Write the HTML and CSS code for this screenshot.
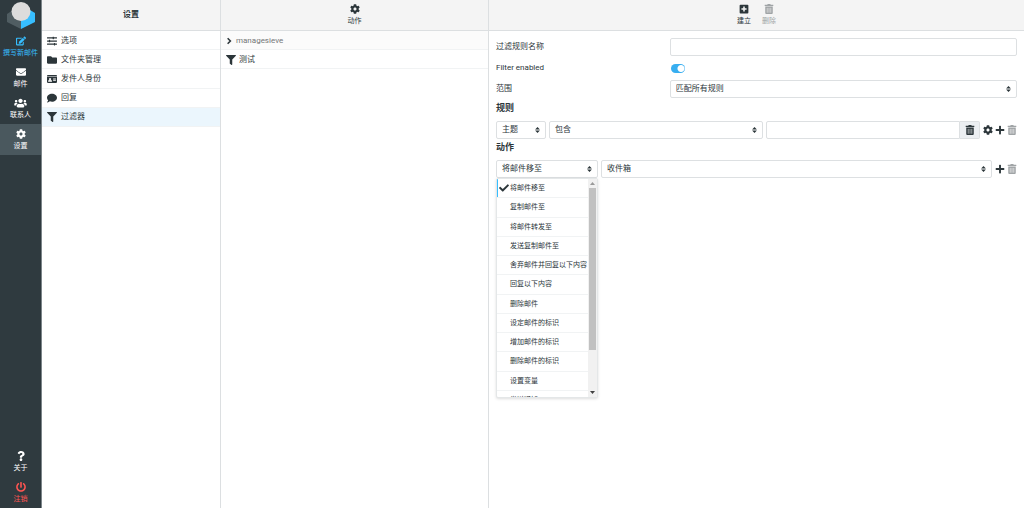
FILE: index.html
```html
<!DOCTYPE html>
<html lang="zh-CN">
<head>
<meta charset="utf-8">
<title>过滤器</title>
<link rel="stylesheet" href="styles.css">
</head>
<body>
<svg class="sprite" aria-hidden="true">
  <symbol id="edit" viewBox="0 0 576 512"><path d="M402.6 83.2l90.2 90.2c3.8 3.8 3.8 10 0 13.8L274.4 405.6l-92.8 10.3c-12.4 1.4-22.9-9.1-21.5-21.5l10.3-92.8L388.8 83.2c3.8-3.8 10-3.8 13.8 0zm162-22.9l-48.8-48.8c-15.2-15.2-39.9-15.2-55.2 0l-35.4 35.4c-3.8 3.8-3.8 10 0 13.8l90.2 90.2c3.8 3.8 10 3.8 13.8 0l35.4-35.4c15.2-15.3 15.2-40 0-55.2zM384 346.2V448H64V128h229.8c3.2 0 6.2-1.3 8.5-3.5l40-40c7.6-7.6 2.2-20.5-8.5-20.5H48C21.5 64 0 85.5 0 112v352c0 26.5 21.5 48 48 48h352c26.5 0 48-21.5 48-48V306.2c0-10.7-12.9-16-20.5-8.5l-40 40c-2.2 2.3-3.5 5.3-3.5 8.5z"/></symbol>
  <symbol id="mail" viewBox="0 0 512 512"><path d="M502.3 190.8c3.9-3.1 9.7-.2 9.7 4.7V400c0 26.5-21.5 48-48 48H48c-26.5 0-48-21.5-48-48V195.6c0-5 5.7-7.8 9.7-4.7 22.4 17.4 52.1 39.5 154.1 113.6 21.1 15.4 56.7 47.8 92.2 47.6 35.7.3 72-32.8 92.3-47.6 102-74.1 131.6-96.3 154-113.7zM256 320c23.2.4 56.6-29.2 73.4-41.4 132.7-96.3 142.8-104.7 173.4-128.7 5.8-4.5 9.2-11.5 9.2-18.9v-19c0-26.5-21.5-48-48-48H48c-26.5 0-48 21.5-48 48v19c0 7.4 3.4 14.3 9.2 18.9 30.6 23.9 40.7 32.4 173.4 128.7 16.8 12.2 50.2 41.8 73.4 41.4z"/></symbol>
  <symbol id="users" viewBox="0 0 640 512"><path d="M96 224c35.3 0 64-28.7 64-64s-28.7-64-64-64-64 28.7-64 64 28.7 64 64 64zm448 0c35.3 0 64-28.7 64-64s-28.7-64-64-64-64 28.7-64 64 28.7 64 64 64zm32 32h-64c-17.6 0-33.5 7.1-45.1 18.6 40.3 22.1 68.9 62 75.1 109.4h66c17.7 0 32-14.3 32-32v-32c0-35.3-28.7-64-64-64zm-256 0c61.9 0 112-50.1 112-112S381.9 32 320 32 208 82.1 208 144s50.1 112 112 112zm76.8 32h-8.3c-20.8 10-43.9 16-68.5 16s-47.6-6-68.5-16h-8.3C179.6 288 128 339.6 128 403.2V432c0 26.5 21.5 48 48 48h288c26.5 0 48-21.5 48-48v-28.8c0-63.6-51.6-115.2-115.2-115.2zm-223.7-13.4C161.5 263.1 145.6 256 128 256H64c-35.3 0-64 28.7-64 64v32c0 17.7 14.3 32 32 32h65.9c6.3-47.4 34.9-87.3 75.2-109.4z"/></symbol>
  <symbol id="cog" viewBox="0 0 512 512"><path d="M487.4 315.7l-42.6-24.6c4.3-23.2 4.3-47 0-70.2l42.6-24.6c4.9-2.8 7.1-8.6 5.5-14-11.1-35.6-30-67.8-54.7-94.6-3.8-4.1-10-5.1-14.8-2.3L380.8 110c-17.9-15.4-38.5-27.3-60.8-35.1V25.8c0-5.6-3.9-10.5-9.4-11.7-36.7-8.2-74.3-7.8-109.2 0-5.5 1.2-9.4 6.1-9.4 11.7V75c-22.2 7.9-42.8 19.8-60.8 35.1L88.7 85.5c-4.9-2.8-11-1.9-14.8 2.3-24.7 26.7-43.6 58.9-54.7 94.6-1.7 5.4.6 11.2 5.5 14L67.3 221c-4.3 23.2-4.3 47 0 70.2l-42.6 24.6c-4.9 2.8-7.1 8.6-5.5 14 11.1 35.6 30 67.8 54.7 94.6 3.8 4.1 10 5.1 14.8 2.3l42.6-24.6c17.9 15.4 38.5 27.3 60.8 35.1v49.2c0 5.6 3.9 10.5 9.4 11.7 36.7 8.2 74.3 7.8 109.2 0 5.5-1.2 9.4-6.1 9.4-11.7v-49.2c22.2-7.9 42.8-19.8 60.8-35.1l42.6 24.6c4.9 2.8 11 1.9 14.8-2.3 24.7-26.7 43.6-58.9 54.7-94.6 1.5-5.5-.7-11.3-5.6-14.1zM256 336c-44.1 0-80-35.9-80-80s35.9-80 80-80 80 35.9 80 80-35.9 80-80 80z"/></symbol>
  <symbol id="help" viewBox="0 0 384 512"><path d="M202.021 0C122.202 0 70.503 32.703 29.914 91.026c-7.363 10.58-5.093 25.086 5.178 32.874l43.138 32.709c10.373 7.865 25.132 6.026 33.253-4.148 25.049-31.381 43.63-49.449 82.757-49.449 30.764 0 68.816 19.799 68.816 49.631 0 22.552-18.617 34.134-48.993 51.164-35.423 19.86-82.299 44.576-82.299 106.405V320c0 13.255 10.745 24 24 24h72.471c13.255 0 24-10.745 24-24v-5.773c0-42.86 125.268-44.645 125.268-160.627C377.504 66.256 286.902 0 202.021 0zM192 373.459c-38.196 0-69.271 31.075-69.271 69.271 0 38.195 31.075 69.27 69.271 69.27s69.271-31.075 69.271-69.271-31.075-69.27-69.271-69.27z"/></symbol>
  <symbol id="power" viewBox="0 0 512 512"><path d="M400 54.1c63 45 104 118.6 104 201.9 0 136.8-110.8 247.7-247.5 248C120 504.3 8.2 393 8 256.4 7.9 173.1 48.9 99.3 111.8 54.2c11.7-8.3 28-4.8 35 7.7L162.6 90c5.9 10.5 3.1 23.8-6.6 31-41.5 30.8-68 79.6-68 134.9-.1 92.3 74.5 168.1 168 168.1 91.6 0 168.6-74.2 168-169.1-.3-51.8-24.7-101.8-68.1-134-9.7-7.2-12.4-20.5-6.5-30.9l15.8-28.1c7-12.4 23.2-16.1 34.8-7.8zM296 264V24c0-13.3-10.7-24-24-24h-32c-13.3 0-24 10.7-24 24v240c0 13.3 10.7 24 24 24h32c13.3 0 24-10.7 24-24z"/></symbol>
  <symbol id="sliders" viewBox="0 0 512 512"><path d="M16 64H288V48q0-16 16-16h32q16 0 16 16V64H496q16 0 16 16v32q0 16-16 16H352v16q0 16-16 16H304q-16 0-16-16V128H16Q0 128 0 112V80Q0 64 16 64zM16 224H96V208q0-16 16-16h32q16 0 16 16v16H496q16 0 16 16v32q0 16-16 16H160v16q0 16-16 16H112q-16 0-16-16V288H16Q0 288 0 272V240q0-16 16-16zM16 384H352V368q0-16 16-16h32q16 0 16 16v16h80q16 0 16 16v32q0 16-16 16H416v16q0 16-16 16H368q-16 0-16-16V448H16Q0 448 0 432V400q0-16 16-16z"/></symbol>
  <symbol id="folder" viewBox="0 0 512 512"><path d="M464 128H272l-64-64H48C21.5 64 0 85.5 0 112v288c0 26.500 21.500 48 48 48h416c26.500 0 48-21.500 48-48V176c0-26.500-21.500-48-48-48z"/></symbol>
  <symbol id="card" viewBox="0 0 576 512"><path fill-rule="evenodd" d="M48 32H528q48 0 48 48v16H0V80Q0 32 48 32zM0 128H576V432q0 48-48 48H48Q0 480 0 432zM176 192a64 64 0 1 0 .1 0zM64 396q0 20 20 20H268q20 0 20-20 0-76-68-76-44 18-88 0-68 0-68 76zM352 192V224H512V192zM352 256V288H512V256zM352 320V352H512V320z"/></symbol>
  <symbol id="comment" viewBox="0 0 512 512"><path d="M256 32C114.600 32 0 125.100 0 240c0 49.600 21.400 95 57 130.700C44.500 421.100 2.700 466 2.200 466.500c-2.200 2.300-2.800 5.700-1.500 8.700S4.800 480 8 480c66.300 0 116-31.800 140.600-51.400 32.700 12.300 69 19.400 107.400 19.400 141.400 0 256-93.100 256-208S397.400 32 256 32z"/></symbol>
  <symbol id="filter" viewBox="0 0 512 512"><path d="M487.976 0H24.028C2.71 0-8.047 25.866 7.058 40.971L192 225.941V432c0 7.831 3.821 15.17 10.237 19.662l80 55.98C298.02 518.69 320 507.493 320 487.98V225.941l184.947-184.97C520.021 25.896 509.338 0 487.976 0z"/></symbol>
  <symbol id="chevron" viewBox="0 0 384 512"><path fill="none" stroke="currentColor" stroke-width="100" d="M105 80L281 256L105 432"/></symbol>
  <symbol id="plus-square" viewBox="0 0 448 512"><path fill-rule="evenodd" d="M48 32H400q48 0 48 48V432q0 48-48 48H48Q0 480 0 432V80Q0 32 48 32zM184 124V216H92V296H184V388H264V296H356V216H264V124z"/></symbol>
  <symbol id="plus" viewBox="0 0 448 512"><path d="M416 208H272V64c0-17.670-14.330-32-32-32h-32c-17.670 0-32 14.330-32 32v144H32c-17.670 0-32 14.330-32 32v32c0 17.670 14.330 32 32 32h144v144c0 17.670 14.330 32 32 32h32c17.670 0 32-14.330 32-32V304h144c17.670 0 32-14.330 32-32v-32c0-17.670-14.330-32-32-32z"/></symbol>
  <symbol id="trash" viewBox="0 0 448 512"><path d="M32 464a48 48 0 0 0 48 48h288a48 48 0 0 0 48-48V128H32zm272-256a16 16 0 0 1 32 0v224a16 16 0 0 1-32 0zm-96 0a16 16 0 0 1 32 0v224a16 16 0 0 1-32 0zm-96 0a16 16 0 0 1 32 0v224a16 16 0 0 1-32 0zM432 32H312l-9.400-18.700A24 24 0 0 0 281.100 0H166.800a23.720 23.720 0 0 0-21.400 13.300L136 32H16A16 16 0 0 0 0 48v32a16 16 0 0 0 16 16h416a16 16 0 0 0 16-16V48a16 16 0 0 0-16-16z"/></symbol>
  <symbol id="check" viewBox="0 0 512 512"><path d="M173.898 439.404l-166.400-166.400c-9.997-9.997-9.997-26.206 0-36.204l36.203-36.204c9.997-9.998 26.207-9.998 36.204 0L192 312.690 432.095 72.596c9.997-9.997 26.207-9.997 36.204 0l36.203 36.204c9.997 9.997 9.997 26.206 0 36.204l-294.400 294.401c-9.998 9.997-26.207 9.997-36.204-.001z"/></symbol>
  <symbol id="caret" viewBox="0 0 4 5"><path d="M2 0L4 2H0zM2 5L0 3H4z"/></symbol>
</svg>

<div class="app">
  <nav class="taskbar" aria-label="任务">
    <svg class="logo" viewBox="0 0 28 28" role="img" aria-label="邮箱">
      <path fill="#505d62" d="M0 12L6 8L14 19V27L0 20z"/>
      <path fill="#37beff" d="M28 11L23 8L14 19V27L28 20z"/>
      <circle cx="14" cy="9.500" r="9.500" fill="#dcdcdc"/>
    </svg>
    <a class="task compose" href="#"><svg class="icon"><use href="#edit"/></svg><span>撰写新邮件</span></a>
    <a class="task" href="#"><svg class="icon"><use href="#mail"/></svg><span>邮件</span></a>
    <a class="task" href="#"><svg class="icon wide"><use href="#users"/></svg><span>联系人</span></a>
    <a class="task active" href="#"><svg class="icon"><use href="#cog"/></svg><span>设置</span></a>
    <a class="task about" href="#"><svg class="icon"><use href="#help"/></svg><span>关于</span></a>
    <a class="task logout" href="#"><svg class="icon"><use href="#power"/></svg><span>注销</span></a>
  </nav>

  <section class="pane settings">
    <header class="bar"><h1 class="title">设置</h1></header>
    <ul class="list sections">
      <li class="row"><a href="#"><svg class="icon"><use href="#sliders"/></svg>选项</a></li>
      <li class="row"><a href="#"><svg class="icon"><use href="#folder"/></svg>文件夹管理</a></li>
      <li class="row"><a href="#"><svg class="icon"><use href="#card"/></svg>发件人身份</a></li>
      <li class="row"><a href="#"><svg class="icon"><use href="#comment"/></svg>回复</a></li>
      <li class="row selected"><a href="#"><svg class="icon"><use href="#filter"/></svg>过滤器</a></li>
    </ul>
  </section>

  <section class="pane filters">
    <header class="bar">
      <button class="tool" type="button"><svg class="icon"><use href="#cog"/></svg>动作</button>
    </header>
    <ul class="list">
      <li class="row group"><a href="#"><svg class="icon small"><use href="#chevron"/></svg>managesieve</a></li>
      <li class="row"><a href="#"><svg class="icon"><use href="#filter"/></svg>测试</a></li>
    </ul>
  </section>

  <main class="pane">
    <header class="bar">
      <button class="tool" type="button"><svg class="icon"><use href="#plus-square"/></svg>建立</button>
      <button class="tool" type="button" disabled><svg class="icon"><use href="#trash"/></svg>删除</button>
    </header>
    <form class="form">
      <div class="field">
        <label for="name">过滤规则名称</label>
        <input class="control" id="name" type="text">
      </div>
      <div class="field switch-field">
        <label for="enabled">Filter enabled</label>
        <input class="switch" id="enabled" type="checkbox" checked>
      </div>
      <div class="field">
        <label for="scope">范围</label>
        <div class="select"><select class="control" id="scope"><option>匹配所有规则</option></select><svg class="caret"><use href="#caret"/></svg></div>
      </div>

      <h2 class="heading">规则</h2>
      <div class="rule">
        <div class="select subject"><select class="control" aria-label="主题"><option>主题</option></select><svg class="caret"><use href="#caret"/></svg></div>
        <div class="select operator"><select class="control" aria-label="条件"><option>包含</option></select><svg class="caret"><use href="#caret"/></svg></div>
        <div class="value">
          <input class="control" type="text" aria-label="值">
          <button class="clear" type="button" aria-label="清除"><svg class="icon"><use href="#trash"/></svg></button>
        </div>
        <div class="actions">
          <button type="button" aria-label="选项"><svg class="icon"><use href="#cog"/></svg></button>
          <button type="button" aria-label="添加"><svg class="icon"><use href="#plus"/></svg></button>
          <button type="button" aria-label="删除" disabled><svg class="icon"><use href="#trash"/></svg></button>
        </div>
      </div>

      <h2 class="heading">动作</h2>
      <div class="rule">
        <div class="select action">
          <select class="control" aria-label="动作"><option>将邮件移至</option></select><svg class="caret"><use href="#caret"/></svg>
          <div class="menu">
            <ul class="options">
              <li><button class="chosen" type="button"><svg class="icon"><use href="#check"/></svg>将邮件移至</button></li>
              <li><button type="button">复制邮件至</button></li>
              <li><button type="button">将邮件转发至</button></li>
              <li><button type="button">发送复制邮件至</button></li>
              <li><button type="button">舍弃邮件并回复以下内容</button></li>
              <li><button type="button">回复以下内容</button></li>
              <li><button type="button">删除邮件</button></li>
              <li><button type="button">设定邮件的标识</button></li>
              <li><button type="button">增加邮件的标识</button></li>
              <li><button type="button">删除邮件的标识</button></li>
              <li><button type="button">设置变量</button></li>
              <li><button type="button">发送通知</button></li>
            </ul>
            <div class="scrollbar" aria-hidden="true">
              <svg class="arrow faded" viewBox="0 0 9 9"><path d="M4.500 3L7 6H2z"/></svg>
              <div class="track"><div class="thumb"></div></div>
              <svg class="arrow" viewBox="0 0 9 9"><path d="M4.500 6L2 3H7z"/></svg>
            </div>
          </div>
        </div>
        <div class="select folder"><select class="control" aria-label="文件夹"><option>收件箱</option></select><svg class="caret"><use href="#caret"/></svg></div>
        <div class="actions">
          <button type="button" aria-label="添加"><svg class="icon"><use href="#plus"/></svg></button>
          <button type="button" aria-label="删除" disabled><svg class="icon"><use href="#trash"/></svg></button>
        </div>
      </div>
    </form>
  </main>
</div>
</body>
</html>
```
FILE: styles.css
```css
* { box-sizing: border-box; }

body {
  margin: 0;
  color: #2c363a;
  background: #fff;
  font: 8px/12px Roboto, "Noto Sans CJK SC", sans-serif;
}

button, input, select { font: inherit; color: inherit; }
button { padding: 0; border: 0; background: none; }
a { color: inherit; text-decoration: none; }
ul { margin: 0; padding: 0; list-style: none; }
.sprite { position: absolute; width: 0; height: 0; }
.icon { display: block; flex: none; width: 10px; height: 10px; fill: currentColor; }
.icon.wide { width: 13px; }
.icon.small { width: 6px; height: 8px; }

.app {
  display: grid;
  grid-template-columns: 42px 179px 268px 1fr;
  min-height: 100vh;
}

/* Task bar */
.taskbar {
  display: flex;
  flex-direction: column;
  color: #fff;
  background: #2f3a3f;
  font-size: 7px;
  border-right: 1px solid #7c8589;
}
.logo { align-self: center; width: 28px; height: 28px; margin: 2px 0 1px; }
.task {
  display: flex;
  flex-direction: column;
  align-items: center;
  justify-content: center;
  gap: 1px;
  height: 31px;
  padding-top: 2px;
  white-space: nowrap;
}
.compose { color: #37beff; }
.active { background: #4a585e; }
.about { margin-top: auto; }
.logout { color: #ff5552; }

/* Columns */
.pane { min-width: 0; }
.settings, .filters { border-right: 1px solid #dcdfe1; }
.bar {
  display: flex;
  align-items: center;
  justify-content: center;
  gap: 11px;
  height: 31px;
  background: #f4f4f4;
  border-bottom: 1px solid #dcdfe1;
}
.title { margin: 0; font-size: 8px; font-weight: 700; }
.tool {
  display: flex;
  flex-direction: column;
  align-items: center;
  gap: 1px;
  font-size: 7px;
}
.tool:disabled, .actions button:disabled { color: #a0a4a6; }

.sections { display: grid; grid-auto-rows: 1fr; height: 96px; }
.row { display: flex; min-height: 19px; border-bottom: 1px solid #f1f3f4; }
.row a { display: flex; flex: 1; align-items: center; gap: 4px; padding: 1px 5px 0; }
.filters .row a { gap: 3px; }
.filters .group a { gap: 4px; }
.selected { background: #ebf6fd; }
.group { color: #737677; background: #fbfbfb; }
.group .icon { color: #2c363a; }

/* Form */
.form { padding: 7px; }
.field {
  display: grid;
  grid-template-columns: 1fr 2fr;
  align-items: center;
  margin-bottom: 4px;
}
.switch-field { height: 16px; }
.control {
  display: block;
  width: 100%;
  height: 18px;
  padding: 0 5px;
  border: 1px solid #dde0e2;
  border-radius: 2px;
  outline: 0;
  background: #fff;
  appearance: none;
}
.switch {
  appearance: none;
  width: 14px;
  height: 9px;
  margin: 0 1px;
  border-radius: 5px;
  background: radial-gradient(circle at 10px 50%, #fff 3px, #37aef0 4px);
}
.select { position: relative; min-width: 0; }
.caret {
  position: absolute;
  top: 6px;
  right: 6px;
  width: 5px;
  height: 6px;
  fill: #2c363a;
  pointer-events: none;
}
.heading { margin: 0; font-size: 9px; line-height: 13px; font-weight: 700; }
.rule { display: flex; gap: 3px; margin: 6px 0 2px; }
.subject { flex: 0 0 50px; }
.operator { flex: 1 1 0; }
.value { display: flex; flex: 1 1 0; }
.value .control { flex: 1; min-width: 0; border-radius: 2px 0 0 2px; }
.clear {
  display: grid;
  place-items: center;
  width: 20px;
  border: 1px solid #dde0e2;
  border-left: 0;
  border-radius: 0 2px 2px 0;
  background: #eceff2;
}
.action { flex: 0 0 102px; }
.folder { flex: 1; }
.actions { display: flex; align-items: center; gap: 2px; }

/* Open action menu */
.menu {
  position: absolute;
  top: 100%;
  left: 0;
  display: flex;
  width: 100%;
  height: 220px;
  overflow: hidden;
  border: 1px solid #e4e7e8;
  border-radius: 2px;
  background: #fff;
  box-shadow: 0 1px 3px #0002;
}
.options {
  display: grid;
  flex: 1;
  grid-auto-rows: 1fr;
  height: 231px;
  font-size: 7px;
}
.options li { display: flex; border-bottom: 1px solid #f1f3f4; }
.options button {
  display: flex;
  flex: 1;
  align-items: center;
  padding-left: 13px;
  white-space: nowrap;
}
.options .chosen {
  gap: 1px;
  padding-left: 1px;
  border-left: 1px solid #37beff;
}
.scrollbar { display: flex; flex-direction: column; width: 9px; background: #f1f1f1; }
.arrow { width: 9px; height: 9px; fill: #404040; }
.arrow.faded { fill: #999; }
.track { flex: 1; }
.thumb { height: 81%; margin: 0 1px; background: #c1c1c1; }
```
